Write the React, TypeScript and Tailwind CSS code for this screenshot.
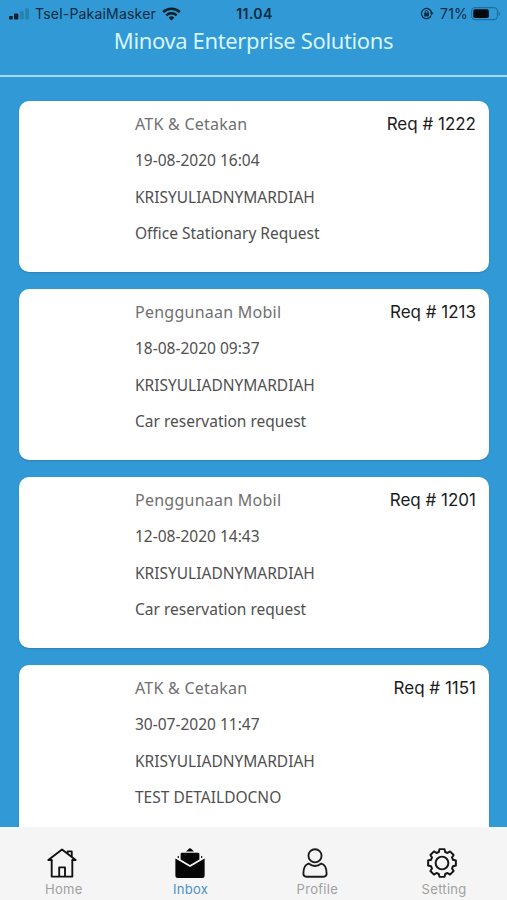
import type { ReactNode } from "react";

type Request = {
  id: string;
  category: string;
  date: string;
  requester: string;
  detail: string;
};

const REQUESTS: Request[] = [
  {
    id: "1222",
    category: "ATK & Cetakan",
    date: "19-08-2020 16:04",
    requester: "KRISYULIADNYMARDIAH",
    detail: "Office Stationary Request",
  },
  {
    id: "1213",
    category: "Penggunaan Mobil",
    date: "18-08-2020 09:37",
    requester: "KRISYULIADNYMARDIAH",
    detail: "Car reservation request",
  },
  {
    id: "1201",
    category: "Penggunaan Mobil",
    date: "12-08-2020 14:43",
    requester: "KRISYULIADNYMARDIAH",
    detail: "Car reservation request",
  },
  {
    id: "1151",
    category: "ATK & Cetakan",
    date: "30-07-2020 11:47",
    requester: "KRISYULIADNYMARDIAH",
    detail: "TEST DETAILDOCNO",
  },
];

function SignalIcon() {
  return (
    <svg width="22" height="12" viewBox="0 0 22 12" fill="#0b2028">
      <rect x="1" y="8" width="3.8" height="3.6" rx="1" />
      <rect x="6" y="5.4" width="4.4" height="6.2" rx="1" />
      <rect x="12" y="3" width="3.8" height="8.6" rx="1" fill="#2682b0" />
      <rect x="17.2" y="0.2" width="3.8" height="11.4" rx="1" fill="#2682b0" />
    </svg>
  );
}

function WifiIcon() {
  return (
    <svg width="19" height="14" viewBox="0 0 19 14" fill="none" stroke="#0b2028" strokeWidth="2.5">
      <path d="M1.2 5.2a11.8 11.8 0 0 1 16.6 0" />
      <path d="M4.3 8.4a7.4 7.4 0 0 1 10.4 0" />
      <path d="M9.5 13.6 6.6 10.7a4.1 4.1 0 0 1 5.8 0z" fill="#0b2028" stroke="none" />
    </svg>
  );
}

function RotationLockIcon() {
  return (
    <svg width="14" height="13" viewBox="0 0 14 13" fill="none" stroke="#0b2a40" strokeWidth="1.3">
      <path d="M11.2 8.6A5.1 5.1 0 1 1 11.6 6" />
      <path d="M9.8 5.4h3.8l-1.9 2.8z" fill="#0b2a40" stroke="none" />
      <rect x="4.2" y="5.7" width="4.8" height="3.7" rx="0.6" fill="#0b2a40" stroke="none" />
      <path d="M5.2 6V4.9a1.4 1.4 0 0 1 2.8 0V6" strokeWidth="1" />
    </svg>
  );
}

function BatteryIcon() {
  return (
    <svg width="30" height="14" viewBox="0 0 30 14">
      <rect x="0.6" y="0.6" width="25.8" height="12" rx="3.6" fill="none" stroke="#1f6f9f" strokeWidth="1.1" />
      <rect x="2.3" y="2.3" width="15.5" height="8.8" rx="1.8" fill="#05080f" />
      <path d="M27.6 4.4c2 .8 2 3.8 0 4.6z" fill="#1f6f9f" />
    </svg>
  );
}

function HomeIcon() {
  return (
    <svg className="mr-[2px]" width="32" height="32" viewBox="0 0 32 32" fill="none" stroke="#111" strokeWidth="2" strokeLinejoin="round">
      <path d="M5 12.8v17.7h22V12.8" />
      <path d="M5 12.8H1.4L16 1.6l14.6 11.2H27" strokeLinecap="round" />
      <path d="M22 5.8V3.6h4.4v5.6" />
      <path d="M13 30.4v-9.800h6.200v9.800" />
    </svg>
  );
}

function InboxIcon() {
  return (
    <svg className="mr-px" width="32" height="32" viewBox="0 0 32 32" fill="#050505">
      <path d="M11.8 3.6 14.2 1.2a2.6 2.6 0 0 1 3.6 0l2.4 2.4z" />
      <path d="M7.2 5h17.6a1.2 1.2 0 0 1 1.2 1.2v6L16 18 6 12.2v-6A1.2 1.2 0 0 1 7.2 5z" />
      <path d="M.4 11.2 16 20.2l15.6-9v18.3a2.4 2.4 0 0 1-2.4 2.4H2.800a2.400 2.400 0 0 1-2.400-2.400z" />
      <path d="M4.2 8.2v2.6L2.3 9.7zM27.8 8.2v2.6l1.900-1.100z" />
    </svg>
  );
}

function ProfileIcon() {
  return (
    <svg className="mr-[3px]" width="32" height="32" viewBox="0 0 32 32" fill="none" stroke="#1c1c1c" strokeWidth="2" strokeLinejoin="round">
      <circle cx="16" cy="8.3" r="7" />
      <path d="M9.3 16.6C5.2 17.6 3.6 22 3.6 27.2c0 2.2 1.1 3.4 3.2 3.4h18.4c2.100 0 3.200-1.200 3.200-3.400 0-5.200-1.600-9.600-5.700-10.600-1.900 1.600-4.200 2.600-6.700 2.600s-4.800-1-6.700-2.600z" />
    </svg>
  );
}

function GearIcon() {
  return (
    <svg className="mr-[3px]" width="32" height="32" viewBox="0 0 32 32" fill="none" stroke="#151515" strokeWidth="2.1" strokeLinejoin="round">
      <path d="M13.3 1.2h5.4l.7 3.1 2.47 1.02 2.69-1.69 3.81 3.81-1.69 2.69 1.02 2.47 3.1.7v5.4l-3.1.7-1.02 2.47 1.69 2.69-3.81 3.81-2.69-1.69-2.47 1.02-.7 3.1h-5.4l-.7-3.1-2.47-1.02-2.69 1.69-3.81-3.81 1.69-2.69-1.02-2.47-3.1-.7v-5.4l3.1-.7 1.02-2.47-1.69-2.69 3.81-3.81 2.69 1.69 2.47-1.02z" />
      <circle cx="16" cy="16" r="6.8" />
    </svg>
  );
}

function StatusBar() {
  return (
    <div className="grid h-[27px] grid-cols-[1fr_auto_1fr] items-center pr-1.5 pl-2 font-['Inter',sans-serif] text-[#0b2a40]">
      <div className="flex items-center">
        <SignalIcon />
        <span className="mr-1.5 ml-[5px] text-[14px] tracking-[0.2px] whitespace-nowrap">Tsel-PakaiMasker</span>
        <WifiIcon />
      </div>
      <span className="text-[14px] font-semibold tracking-[0.4px]">11.04</span>
      <div className="flex items-center justify-end">
        <RotationLockIcon />
        <span className="mr-[3px] ml-1.5 text-[14px] tracking-[0.2px]">71%</span>
        <BatteryIcon />
      </div>
    </div>
  );
}

function RequestCard({ request }: { request: Request }) {
  return (
    <article className="h-[171px] shrink-0 rounded-[10px] bg-white pt-[5px] pr-[13px] pl-[116px] font-['Noto_Sans',sans-serif] text-[15.5px] leading-[36.5px] text-[#505050] shadow-[0_1px_2px_rgba(0,0,0,0.15)]">
      <div className="flex h-9 justify-between">
        <h2 className="text-[16px] tracking-[0.25px] text-[#707070]">{request.category}</h2>
        <span className="font-['Inter',sans-serif] text-[17px] text-[#1c1c1c]">Req # {request.id}</span>
      </div>
      <p>{request.date}</p>
      <p>{request.requester}</p>
      <p>{request.detail}</p>
    </article>
  );
}

function Tab({ label, active, children }: { label: string; active?: boolean; children: ReactNode }) {
  return (
    <button
      type="button"
      className={`flex flex-1 flex-col items-center pt-[21px] font-['Inter',sans-serif] text-[13px] leading-[22px] tracking-[0.3px] ${
        active ? "text-[#4a90c8]" : "text-[#a0a0a0]"
      }`}
    >
      {children}
      <span className="ml-px">{label}</span>
    </button>
  );
}

export default function App() {
  return (
    <div className="flex h-[900px] w-[507px] flex-col overflow-hidden bg-[#3199d5]">
      <header className="h-[77px] shrink-0 border-b-2 border-[#a5daf4]">
        <StatusBar />
        <h1 className="text-center font-['Noto_Sans',sans-serif] text-[22px] leading-[27px] tracking-[-0.37px] text-[#d7f5ff]">
          Minova Enterprise Solutions
        </h1>
      </header>

      <main className="flex min-h-0 flex-1 flex-col gap-[17px] overflow-hidden pt-6 pr-[18px] pl-[19px]">
        {REQUESTS.map((request) => (
          <RequestCard key={request.id} request={request} />
        ))}
      </main>

      <nav className="flex h-[73px] shrink-0 bg-[#f5f5f5]">
        <Tab label="Home">
          <HomeIcon />
        </Tab>
        <Tab label="Inbox" active>
          <InboxIcon />
        </Tab>
        <Tab label="Profile">
          <ProfileIcon />
        </Tab>
        <Tab label="Setting">
          <GearIcon />
        </Tab>
      </nav>
    </div>
  );
}
